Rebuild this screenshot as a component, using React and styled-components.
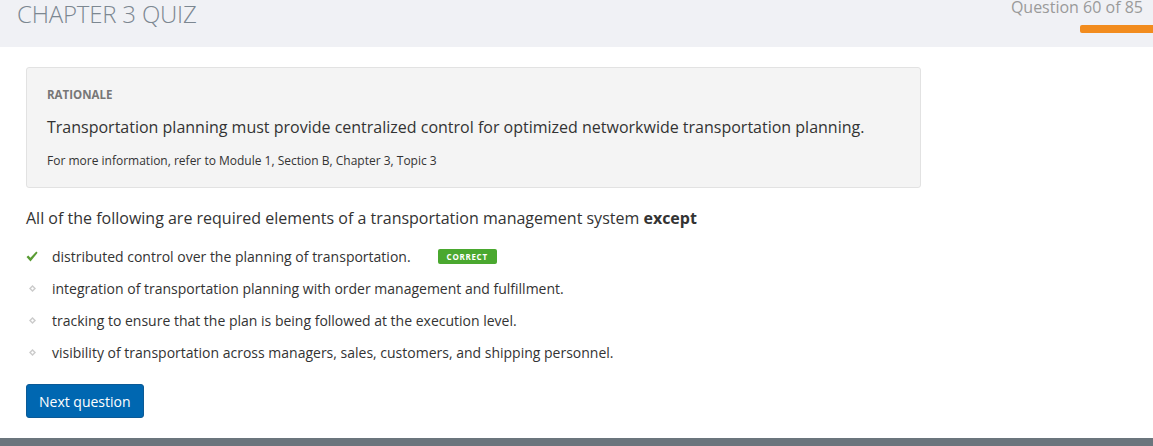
import styled, { createGlobalStyle } from "styled-components";

const GlobalStyle = createGlobalStyle`
  html, body {
    margin: 0;
    padding: 0;
    background: #ffffff;
    font-family: "Open Sans", "Liberation Sans", sans-serif;
  }
`;

const Page = styled.div`
  display: flex;
  flex-direction: column;
  height: 446px;
  overflow: hidden;
`;

const Header = styled.div`
  height: 47px;
  flex-shrink: 0;
  background-color: #f0f1f5;
  display: flex;
  justify-content: space-between;
  align-items: flex-start;
`;

const Title = styled.h1`
  margin: 0;
  padding-left: 17px;
  font-size: 24px;
  line-height: 27px;
  font-weight: 300;
  color: #7c8791;
  letter-spacing: -0.2px;
`;

const Progress = styled.div`
  display: flex;
  flex-direction: column;
  align-items: flex-end;
`;

const ProgressLabel = styled.div`
  padding-right: 10px;
  font-size: 16px;
  line-height: 16px;
  margin-top: -1px;
  color: #9a9a9a;
`;

const ProgressBar = styled.div`
  margin-top: 10px;
  width: 73px;
  height: 8px;
  background-color: #f28c1e;
  border-radius: 2px 0 0 2px;
`;

const Content = styled.div`
  flex: 1;
  padding: 20px 26px 0;
`;

const Rationale = styled.div`
  width: 853px;
  padding: 19px 20px 18px;
  background-color: #f4f4f4;
  border: 1px solid #e2e2e2;
  border-radius: 3px;
`;

const RationaleLabel = styled.div`
  font-size: 11.5px;
  font-weight: 700;
  color: #777;
  line-height: 16px;
`;

const RationaleText = styled.p`
  margin: 13px 0 0;
  font-size: 16px;
  line-height: 22px;
  color: #333;
`;

const MoreInfo = styled.p`
  margin: 15px 0 0;
  font-size: 12px;
  line-height: 16px;
  color: #333;
`;

const Question = styled.p`
  margin: 19px 0 0;
  font-size: 16px;
  line-height: 22px;
  color: #333;

  b {
    font-weight: 700;
  }
`;

const Options = styled.ul`
  list-style: none;
  margin: 11px 0 0;
  padding: 0;
`;

const Option = styled.li`
  display: flex;
  align-items: center;
  height: 32px;
  font-size: 14px;
  color: #333;
`;

const Marker = styled.span`
  width: 26px;
  flex-shrink: 0;
  display: flex;
  align-items: center;
  padding-left: ${(p) => (p.$check ? "0" : "3px")};
  box-sizing: border-box;
`;

const Badge = styled.span`
  margin-left: 27px;
  padding: 0 9px;
  height: 15px;
  line-height: 15px;
  background-color: #4aa82f;
  color: #fff;
  font-size: 8px;
  font-weight: 700;
  letter-spacing: 0.7px;
  border-radius: 2px;
`;

const NextButton = styled.button`
  margin-top: 16px;
  height: 34px;
  padding: 0 12px;
  border: 1px solid #0b5a96;
  border-radius: 3px;
  background-color: #0067b1;
  color: #fff;
  font-family: inherit;
  font-size: 14px;
  cursor: pointer;
`;

const Footer = styled.div`
  height: 8px;
  flex-shrink: 0;
  background-color: #6b757d;
`;

const CheckIcon = () => (
  <svg width="12" height="11" viewBox="0 0 12 11">
    <path d="M0.5 6 L2.3 4.4 L4.4 6.8 L10.3 0.5 L11.6 1.8 L4.5 10.5 Z" fill="#5a9c34" />
  </svg>
);

const Diamond = () => (
  <svg width="7" height="7" viewBox="0 0 7 7">
    <path d="M3.5 0 L7 3.5 L3.5 7 L0 3.5 Z" fill="#cbcbcb" />
    <path d="M3.5 2 L5 3.5 L3.5 5 L2 3.5 Z" fill="#fff" />
  </svg>
);

const options = [
  { text: "distributed control over the planning of transportation.", correct: true },
  { text: "integration of transportation planning with order management and fulfillment." },
  { text: "tracking to ensure that the plan is being followed at the execution level." },
  { text: "visibility of transportation across managers, sales, customers, and shipping personnel." },
];

export default function App() {
  return (
    <>
      <GlobalStyle />
      <Page>
        <Header>
          <Title>CHAPTER 3 QUIZ</Title>
          <Progress>
            <ProgressLabel>Question 60 of 85</ProgressLabel>
            <ProgressBar />
          </Progress>
        </Header>
        <Content>
          <Rationale>
            <RationaleLabel>RATIONALE</RationaleLabel>
            <RationaleText>
              Transportation planning must provide centralized control for optimized networkwide
              transportation planning.
            </RationaleText>
            <MoreInfo>For more information, refer to Module 1, Section B, Chapter 3, Topic 3</MoreInfo>
          </Rationale>
          <Question>
            All of the following are required elements of a transportation management system{" "}
            <b>except</b>
          </Question>
          <Options>
            {options.map((o) => (
              <Option key={o.text}>
                <Marker $check={o.correct}>{o.correct ? <CheckIcon /> : <Diamond />}</Marker>
                {o.text}
                {o.correct && <Badge>CORRECT</Badge>}
              </Option>
            ))}
          </Options>
          <NextButton>Next question</NextButton>
        </Content>
        <Footer />
      </Page>
    </>
  );
}
